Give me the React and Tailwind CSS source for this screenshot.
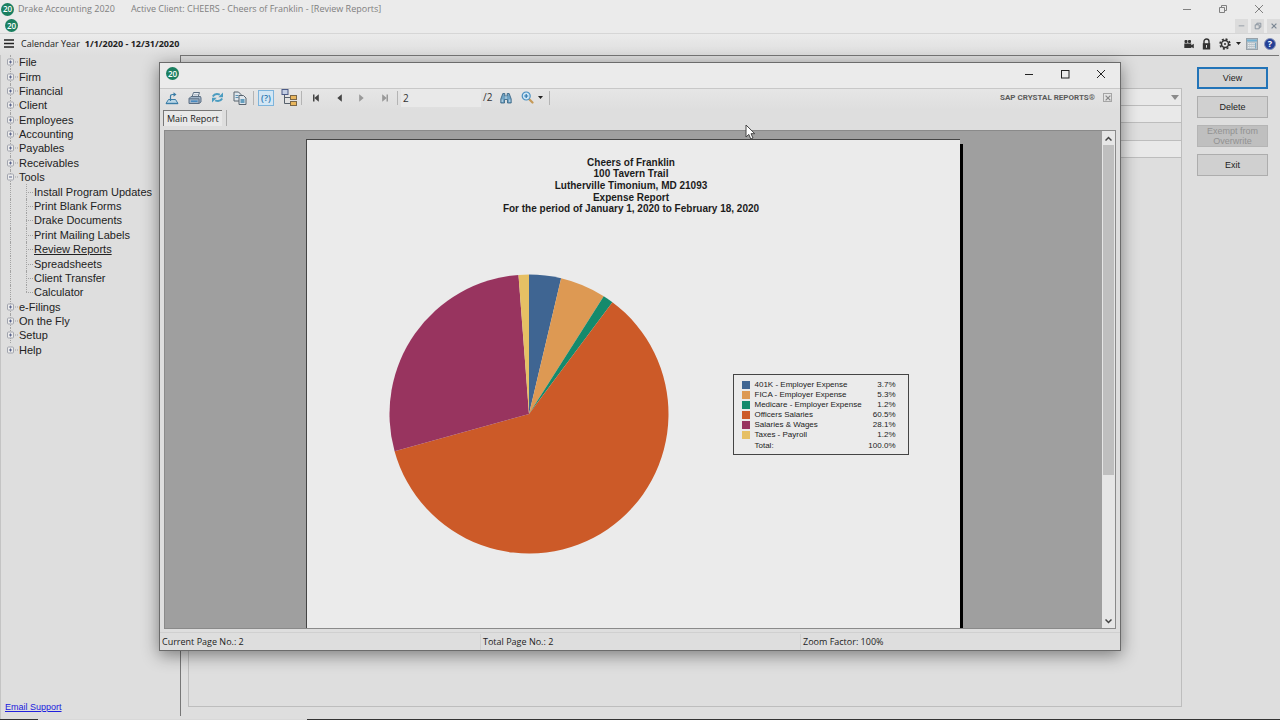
import React, { useState } from 'react';

const expenses = [
  { name: '401K - Employer Expense', value: 3.7, color: '#3f6592' },
  { name: 'FICA - Employer Expense', value: 5.3, color: '#dd9953' },
  { name: 'Medicare - Employer Expense', value: 1.2, color: '#148a6c' },
  { name: 'Officers Salaries', value: 60.5, color: '#cc5a28' },
  { name: 'Salaries & Wages', value: 28.1, color: '#98345f' },
  { name: 'Taxes - Payroll', value: 1.2, color: '#e6c064' },
];

const menu = [
  { label: 'File' },
  { label: 'Firm' },
  { label: 'Financial' },
  { label: 'Client' },
  { label: 'Employees' },
  { label: 'Accounting' },
  { label: 'Payables' },
  { label: 'Receivables' },
  { label: 'Tools', open: true },
  { label: 'Install Program Updates', child: true },
  { label: 'Print Blank Forms', child: true },
  { label: 'Drake Documents', child: true },
  { label: 'Print Mailing Labels', child: true },
  { label: 'Review Reports', child: true, active: true },
  { label: 'Spreadsheets', child: true },
  { label: 'Client Transfer', child: true },
  { label: 'Calculator', child: true, last: true },
  { label: 'e-Filings' },
  { label: 'On the Fly' },
  { label: 'Setup' },
  { label: 'Help', last: true },
];

const Logo = () => (
  <span className="flex size-[13px] shrink-0 items-center justify-center rounded-full bg-[#1b7f60] text-[8px] leading-none font-semibold text-white">
    20
  </span>
);

const Separator = () => <span className="h-[14px] w-px bg-[#b4b4b4]" />;

/* Window controls */
const MinimizeIcon = ({ size = 10 }) => (
  <svg width={size} height={size} viewBox="0 0 10 10" stroke="currentColor" fill="none">
    <path d="M1 5.5h8" />
  </svg>
);

const MaximizeIcon = () => (
  <svg width="10" height="10" viewBox="0 0 10 10" stroke="currentColor" fill="none">
    <rect x="1.5" y="1.5" width="7.5" height="7.5" />
  </svg>
);

const RestoreIcon = ({ size = 10 }) => (
  <svg width={size} height={size} viewBox="0 0 10 10" stroke="currentColor" fill="none">
    <path d="M1.5 3.5h5v5h-5zM3.5 3.5v-2h5v5h-2" />
  </svg>
);

const CloseIcon = ({ size = 10, weight = 1 }) => (
  <svg width={size} height={size} viewBox="0 0 10 10" stroke="currentColor" strokeWidth={weight} fill="none">
    <path d="M1 1l8 8M9 1L1 9" />
  </svg>
);

/* Report toolbar */
const ExportIcon = () => (
  <svg width="14" height="14" viewBox="0 0 14 14" fill="none" stroke="#3b7da6">
    <path d="M3.5 8.5h7l2.5 4H1z" fill="#b9d6e6" />
    <path d="M1 12.5h12" strokeWidth="1.4" />
    <path d="M5.5 10V5.5q0-2 2-2h2" strokeWidth="1.2" />
    <path d="M8.5 1.2l3 2.3-3 2.3z" fill="#3b7da6" stroke="none" />
  </svg>
);

const PrintIcon = () => (
  <svg width="14" height="14" viewBox="0 0 14 14" fill="none" stroke="#5c6f83">
    <path d="M4 6l1.5-4.5h6L10 6z" fill="#e8edf2" />
    <path d="M6 3.5h4M5.5 5h4" stroke="#9aa9b8" strokeWidth=".6" />
    <path d="M1 7.5L3 5.5h9.500L13 7v4l-2 1.5H1z" fill="#9fb3c7" />
    <path d="M1 7.8h10v4.500" />
    <path d="M3 10.2h6.500" stroke="#3e86c0" strokeWidth="1.4" />
  </svg>
);

const RefreshIcon = () => (
  <svg width="13" height="13" viewBox="0 0 13 13" fill="none" stroke="#4b9cc0" strokeWidth="2">
    <path d="M1.8 5.5Q4 1.8 8.8 3.6" />
    <path d="M11.2 7.5Q9 11.2 4.2 9.4" />
    <path d="M12 1.5v4.7H7.300z" fill="#4b9cc0" stroke="none" />
    <path d="M1 11.500V6.800h4.700z" fill="#4b9cc0" stroke="none" />
  </svg>
);

const CopyIcon = () => (
  <svg width="14" height="14" viewBox="0 0 14 14" fill="#dfe6ec" stroke="#59646f">
    <path d="M1 1h4.500L8 3.500V10H1z" />
    <path d="M2.500 4.500h3M2.500 6.500h3" stroke="#5b93b5" />
    <path d="M6 4.500h4.500L13 7v6.500H6z" />
    <path d="M7.500 9h4M7.500 11h4" stroke="#3d86ae" strokeWidth="1.3" />
  </svg>
);

const TreeIcon = () => (
  <svg width="16" height="17" viewBox="0 0 16 17" fill="none" stroke="#56606b">
    <path d="M3.500 6v8.500h6M3.500 8.500h6" />
    <rect x="1" y=".5" width="6" height="5" fill="#c4cfe4" stroke="#4c5b86" />
    <rect x="9.500" y="6.500" width="6" height="4" fill="#e9b65c" stroke="#7a6647" />
    <rect x="9.500" y="12.500" width="6" height="4" fill="#e9b65c" stroke="#7a6647" />
  </svg>
);

const NavIcon = ({ bar, flip, color }) => (
  <svg width="8" height="8" viewBox="0 0 8 8" fill={color} className={flip ? 'rotate-180' : ''}>
    {bar && <path d="M1 .5h1.500v7H1z" />}
    <path d="M6.800 .2v7.600L2.300 4z" />
  </svg>
);

const BinocularsIcon = () => (
  <svg width="12" height="12" viewBox="0 0 12 12" fill="#6fa3c4" stroke="#33607f" strokeWidth=".8">
    <path d="M2.800 1.500h2V4h2.400V1.500h2l2 5.500v4H7.500V7.500h-3V11H.8V7z" />
    <path d="M2.200 7.500V10M9.800 7.500V10M6 4v3" stroke="#e3eef5" />
  </svg>
);

const ZoomIcon = () => (
  <svg width="13" height="13" viewBox="0 0 13 13" fill="none">
    <path d="M8 8l3.500 3.500" stroke="#c69a58" strokeWidth="2.2" strokeLinecap="round" />
    <circle cx="5.200" cy="5" r="4" fill="#cfe6f5" stroke="#4a8fc0" strokeWidth="1.2" />
    <path d="M5.200 3v4M3.200 5h4" stroke="#2d78b0" strokeWidth="1.2" />
  </svg>
);

const DownArrow = () => (
  <svg width="5" height="3" viewBox="0 0 5 3" fill="#222">
    <path d="M0 0h5L2.500 3z" />
  </svg>
);

/* Main toolbar */
const CameraIcon = () => (
  <svg width="10" height="10" viewBox="0 0 10 10" fill="#333">
    <rect x=".5" y="1" width="3" height="3" rx="1" />
    <rect x="4" y="1" width="3" height="3" rx="1" />
    <path d="M.3 4.500h7V9h-7zM7.300 6.200L9.800 4.800v4.400L7.300 7.900z" />
  </svg>
);

const LockIcon = () => (
  <svg width="9" height="12" viewBox="0 0 9 12" fill="#333">
    <path d="M2 6V3.500a2.500 2.500 0 0 1 5 0V6" fill="none" stroke="#333" strokeWidth="1.4" />
    <path d="M.8 5.200h7.400v6.300H.8z" />
    <path d="M4 7h1v2.800H4z" fill="#ddd" />
  </svg>
);

const GearIcon = () => (
  <svg width="12" height="12" viewBox="0 0 12 12" fill="none" stroke="#333">
    <circle cx="6" cy="6" r="3.500" strokeWidth="1.5" />
    <circle cx="6" cy="6" r="4.900" strokeWidth="1.6" strokeDasharray="2 1.850" />
    <circle cx="6" cy="6" r="1" fill="#333" stroke="none" />
  </svg>
);

const CalculatorIcon = () => (
  <svg width="12" height="12" viewBox="0 0 12 12" fill="none">
    <rect x=".5" y=".5" width="11" height="11" fill="#b9c3ca" stroke="#99a2a9" />
    <path d="M1 2.500h10" stroke="#72b2d4" strokeWidth="2" />
    <path d="M2 5.500h8M2 7.500h8M2 9.500h8" stroke="#e4e8ea" strokeDasharray="1.500 .6" />
    <path d="M9.500 5v5.500" stroke="#7dacc6" />
  </svg>
);

const HelpIcon = () => (
  <span className="flex size-3 items-center justify-center rounded-full border border-[#8793b8] bg-[#233f95] text-[9px] leading-none font-bold text-white">
    ?
  </span>
);

const TreeRow = ({ item }) => (
  <li className="flex items-center">
    <span className="relative w-[18px] self-stretch">
      {!(item.last && !item.child) && (
        <span className="absolute inset-y-0 left-[9px] border-l border-dotted border-[#a3a3a3]" />
      )}
      {!item.child && (
        <svg className="absolute top-1/2 left-[5px] -translate-y-1/2" width="12" height="9" viewBox="0 0 12 9" fill="none">
          <path d="M9 4.500h3" stroke="#a3a3a3" strokeDasharray="1 1" />
          <rect x="1.500" y="1.500" width="6" height="6" rx="1" fill="#ececec" stroke="#a2a5ae" />
          <path d={item.open ? 'M3 4.500h3' : 'M3 4.500h3M4.500 3v3'} stroke="#5a648c" />
        </svg>
      )}
    </span>
    {item.child && (
      <span className="relative w-[15px] self-stretch">
        <span
          className={`absolute top-0 left-[7px] border-l border-dotted border-[#a3a3a3] ${
            item.last ? 'bottom-1/2' : 'bottom-0'
          }`}
        />
        <span className="absolute top-1/2 right-px left-[7px] border-t border-dotted border-[#a3a3a3]" />
      </span>
    )}
    <a href="#" className={`whitespace-nowrap ${item.active ? 'underline' : ''}`}>
      {item.label}
    </a>
  </li>
);

const PieChart = () => {
  const total = expenses.reduce((sum, item) => sum + item.value, 0);
  const point = (share) => {
    const angle = (share / total) * 2 * Math.PI;
    return `${140 + 139.5 * Math.sin(angle)} ${140 - 139.5 * Math.cos(angle)}`;
  };
  let start = 0;

  return (
    <svg width="280" height="280" viewBox="0 0 280 280" className="shrink-0" role="img" aria-label="Expenses">
      {expenses.map((item) => {
        const end = start + item.value;
        const d = `M140 140L${point(start)}A139.5 139.5 0 ${item.value > total / 2 ? 1 : 0} 1 ${point(end)}Z`;
        start = end;
        return <path key={item.name} d={d} fill={item.color} />;
      })}
    </svg>
  );
};

const Legend = () => (
  <div className="w-44 shrink-0 border border-[#444] px-2 pt-[5px] pb-[2px] font-['Liberation_Sans',Arial,sans-serif] text-[8px] text-[#222]">
    <table className="w-full">
      <tbody>
        {expenses.map((item) => (
          <tr key={item.name} className="h-[10px] leading-[10px]">
            <td className="w-[13px] p-0">
              <span className="block size-2" style={{ backgroundColor: item.color }} />
            </td>
            <td className="p-0 whitespace-nowrap">{item.name}</td>
            <td className="p-0 pr-1 text-right">{item.value.toFixed(1)}%</td>
          </tr>
        ))}
        <tr className="h-3 leading-3">
          <td className="p-0" />
          <td className="p-0">Total:</td>
          <td className="p-0 pr-1 text-right">100.0%</td>
        </tr>
      </tbody>
    </table>
  </div>
);

const ReportPage = () => (
  <div className="relative mt-2 w-[654px] shrink-0 border-t border-l border-[#444] bg-[#ebebeb]">
    <div className="absolute top-1 bottom-0 left-full w-[3px] bg-black" />
    <div className="mt-[17px] grid h-[58px] auto-rows-fr items-center pr-1 text-center font-['Liberation_Sans',Arial,sans-serif] text-[10px] leading-none font-bold text-[#1c1c1c]">
      <p>Cheers of Franklin</p>
      <p>100 Tavern Trail</p>
      <p>Lutherville Timonium, MD 21093</p>
      <p>Expense Report</p>
      <p>For the period of January 1, 2020 to February 18, 2020</p>
    </div>
    <div className="mt-[59px] flex items-center gap-16 pl-[82px]">
      <PieChart />
      <Legend />
    </div>
  </div>
);

const ReportWindow = () => {
  const [page, setPage] = useState('2');

  return (
    <section className="absolute top-[62px] right-[159px] bottom-[69px] left-[159px] flex flex-col border border-[#6b6b6b] bg-[#dedede] shadow-[0_4px_16px_rgba(0,0,0,0.45)]">
      <header className="flex h-[25px] shrink-0 items-center justify-between bg-[#ebebeb] pr-[14px] pb-1 pl-[6px] text-[#222]">
        <Logo />
        <div className="flex items-center gap-[26px]">
          <button aria-label="Minimize"><MinimizeIcon /></button>
          <button aria-label="Maximize"><MaximizeIcon /></button>
          <button aria-label="Close"><CloseIcon /></button>
        </div>
      </header>

      <div className="flex h-[22px] shrink-0 items-center border-t border-[#c8c8c8] bg-linear-to-b from-[#e6e6e6] to-[#dedede] pr-2 pb-1 pl-[5px]">
        <div className="flex items-center gap-[9px]">
          <button aria-label="Export"><ExportIcon /></button>
          <button aria-label="Print"><PrintIcon /></button>
          <button aria-label="Refresh"><RefreshIcon /></button>
          <button aria-label="Copy"><CopyIcon /></button>
        </div>
        <div className="ml-[6px] flex items-center gap-1">
          <Separator />
          <button
            aria-label="Parameters"
            className="flex h-4 w-4 items-center justify-center border border-[#7db4dc] bg-[#d3e6f4] text-[9px] font-semibold text-[#2d78b0]"
          >
            (?)
          </button>
          <button aria-label="Group tree" className="ml-[3px]"><TreeIcon /></button>
        </div>
        <div className="ml-1 flex items-center gap-[10px]">
          <Separator />
          <div className="flex items-center gap-[15px]">
            <button aria-label="First page"><NavIcon bar color="#444" /></button>
            <button aria-label="Previous page"><NavIcon color="#444" /></button>
            <button aria-label="Next page"><NavIcon flip color="#999" /></button>
            <button aria-label="Last page"><NavIcon bar flip color="#999" /></button>
          </div>
        </div>
        <div className="ml-2 flex items-center text-[10px] text-[#333]">
          <Separator />
          <input
            aria-label="Page number"
            value={page}
            onChange={(e) => setPage(e.target.value)}
            className="ml-[3px] h-[18px] w-20 bg-[#e9e9e9] px-[2px]"
          />
          <span className="ml-[2px]">/2</span>
          <button aria-label="Find" className="ml-2"><BinocularsIcon /></button>
          <button aria-label="Zoom" className="mr-[6px] ml-[9px] flex items-center gap-1">
            <ZoomIcon />
            <DownArrow />
          </button>
          <Separator />
        </div>
        <div className="ml-auto flex items-center gap-2 font-[Roboto,sans-serif] text-[8px] font-bold text-[#5b5b5b]">
          <span>SAP CRYSTAL REPORTS®</span>
          <button aria-label="Close report" className="flex size-[9px] items-center justify-center border border-[#a5a5a5] text-[#888]">
            <CloseIcon size={6} weight={2} />
          </button>
        </div>
      </div>

      <div className="flex h-5 shrink-0 items-start gap-1 pl-[3px]">
        <button className="h-4 border-t border-l border-[#777] bg-[#e8e8e8] px-[3px] text-[9px] leading-[14px] text-[#222]">
          Main Report
        </button>
        <span className="h-4 w-px bg-[#aaa]" />
      </div>

      <div className="mx-1 flex min-h-0 flex-1 border border-[#8a8a8a] bg-[#9f9f9f]">
        <div className="flex min-w-0 flex-1 justify-center overflow-hidden pr-[2px]">
          <ReportPage />
        </div>
        <div className="flex w-[13px] flex-col items-center bg-[#e6e6e6]">
          <button aria-label="Scroll up" className="flex h-[14px] items-center">
            <svg width="7" height="5" viewBox="0 0 7 5" fill="none" stroke="#444" strokeWidth="1.500"><path d="M.5 4.500l3-3 3 3" /></svg>
          </button>
          <div className="h-[330px] w-[11px] bg-[#bfbfbf]" />
          <button aria-label="Scroll down" className="mt-auto flex h-[14px] items-center">
            <svg width="7" height="5" viewBox="0 0 7 5" fill="none" stroke="#444" strokeWidth="1.500"><path d="M.5 .5l3 3 3-3" /></svg>
          </button>
        </div>
      </div>

      <footer className="mt-[3px] grid h-[18px] shrink-0 grid-cols-3 items-center border-t border-[#d0d0d0] text-[9px] leading-4 text-[#222]">
        <span className="pl-[2px]">Current Page No.: 2</span>
        <span className="border-l border-[#cfcfcf] pl-[2px]">Total Page No.: 2</span>
        <span className="border-l border-[#cfcfcf] pl-[2px]">Zoom Factor: 100%</span>
      </footer>
    </section>
  );
};

const actionClass = 'h-[22px] border border-[#adadad] bg-[#d0d0d0] text-[#222]';

const App = () => (
  <div className="relative flex h-screen flex-col overflow-hidden bg-[#dedede] font-['Open_Sans','Noto_Sans',sans-serif] text-[#222]">
    <header className="flex h-[18px] shrink-0 items-center bg-[#ebebeb] pr-4 pl-px text-[9px] text-[#808080]">
      <Logo />
      <span className="ml-1">Drake Accounting 2020</span>
      <span className="ml-4">Active Client: CHEERS - Cheers of Franklin - [Review Reports]</span>
      <div className="ml-auto flex items-center gap-[26px]">
        <button aria-label="Minimize"><MinimizeIcon /></button>
        <button aria-label="Restore"><RestoreIcon /></button>
        <button aria-label="Close"><CloseIcon /></button>
      </div>
    </header>

    <div className="flex h-[15px] shrink-0 items-center justify-between bg-[#ebebeb] pl-[5px] text-[#7b8794]">
      <Logo />
      <div className="flex gap-[3px]">
        <button aria-label="Minimize report" className="flex h-[14px] w-[13px] items-center justify-center bg-[#dcdcdc]"><MinimizeIcon size={7} /></button>
        <button aria-label="Restore report" className="flex h-[14px] w-[13px] items-center justify-center bg-[#dcdcdc]"><RestoreIcon size={8} /></button>
        <button aria-label="Close report list" className="flex h-[14px] w-[13px] items-center justify-center bg-[#dcdcdc]"><CloseIcon size={6} weight={2} /></button>
      </div>
    </div>

    <div className="flex h-[22px] shrink-0 items-center border-t border-[#d6d6d6] bg-linear-to-b from-[#ebebeb] to-[#dedede] px-1 pb-[2px] text-[9px]">
      <button aria-label="Menu">
        <svg width="10" height="9" viewBox="0 0 10 9" stroke="#222" strokeWidth="1.500"><path d="M0 1h10M0 4.500h10M0 8h10" /></svg>
      </button>
      <span className="ml-[7px]">Calendar Year</span>
      <span className="ml-[5px] font-bold">1/1/2020 - 12/31/2020</span>
      <div className="ml-auto flex items-center">
        <button aria-label="Videos"><CameraIcon /></button>
        <button aria-label="Lock" className="ml-2"><LockIcon /></button>
        <button aria-label="Settings" className="ml-2 flex items-center gap-[5px]"><GearIcon /><DownArrow /></button>
        <button aria-label="Calculator" className="ml-[5px]"><CalculatorIcon /></button>
        <button aria-label="Help" className="ml-[6px]"><HelpIcon /></button>
      </div>
    </div>

    <div className="flex min-h-0 flex-1">
      <nav className="flex w-[180px] shrink-0 flex-col justify-between border-l border-[#c4c4c4] font-['Liberation_Sans',Arial,sans-serif] text-[11px] leading-[14px]">
        <ul className="grid h-[302px] auto-rows-fr">
          {menu.map((item) => (
            <TreeRow key={item.label} item={item} />
          ))}
        </ul>
        <a href="#" className="mb-[5px] self-start pl-1 text-[9px] text-[#2020dd] underline">
          Email Support
        </a>
      </nav>

      <main className="mr-px mb-[3px] flex min-w-0 flex-1 border-t border-l border-[#777] pl-[7px]">
        <div className="mt-8 mb-[9px] flex-1 border border-[#bdbdbd]">
          <select aria-label="Report" className="block h-4 w-full appearance-none bg-[#e9e9e9]" />
          <div className="h-[17px] border-t border-[#bdbdbd] bg-[#e9e9e9]" />
          <div className="h-[18px] border-t border-[#bdbdbd]" />
          <div className="h-[18px] border-y border-[#bdbdbd] bg-[#e9e9e9]" />
        </div>
        <div className="mt-[11px] mr-[11px] ml-[15px] flex w-[71px] flex-col gap-[7px] font-['Liberation_Sans',Arial,sans-serif] text-[9px] leading-[10px]">
          <button className="h-[22px] border-2 border-[#2274b8] bg-[#d4d4d4]">View</button>
          <button className={actionClass}>Delete</button>
          <button disabled className="h-[22px] border border-[#b5b5b5] bg-[#bfbfbf] px-1 text-[#929292]">
            Exempt from Overwrite
          </button>
          <button className={actionClass}>Exit</button>
        </div>
      </main>
    </div>

    <div className="flex h-px shrink-0 bg-[#333]">
      <span className="ml-[3%] w-[21%] bg-[#d8d8d8]" />
    </div>

    {/* Drop-down arrow of the report list */}
    <svg className="pointer-events-none absolute top-[95px] right-[101px]" width="8" height="5" viewBox="0 0 8 5" fill="#8b8b8b">
      <path d="M0 0h8L4 5z" />
    </svg>

    <ReportWindow />

    {/* Mouse pointer */}
    <svg className="pointer-events-none absolute top-[124px] left-[745px]" width="11" height="17" viewBox="0 0 11 17">
      <path d="M1 1v12l2.800-2.600 2 4.600 2.200-1-2-4.300h3.800z" fill="#fff" stroke="#444" />
    </svg>
  </div>
);

export default App;
